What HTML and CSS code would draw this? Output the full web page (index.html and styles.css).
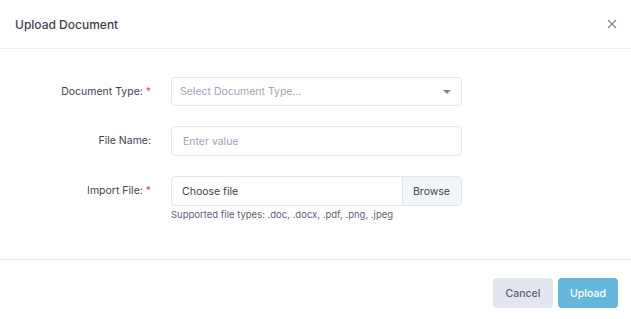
FILE: index.html
```html
<!DOCTYPE html>
<html lang="en">
<head>
    <meta charset="UTF-8">
    <meta name="viewport" content="width=device-width, initial-scale=1.0">
    <title>Upload Document</title>
    <link rel="stylesheet" href="styles.css">
</head>
<body>
    <div class="modal">
        <div class="modal-header">
            <h1 class="modal-title">Upload Document</h1>
            <button class="close-btn" aria-label="Close">
                <svg width="10" height="10" viewBox="0 0 10 10">
                    <path d="M1 1L9 9M9 1L1 9" stroke="#7e8299" stroke-width="1.2" fill="none"/>
                </svg>
            </button>
        </div>

        <div class="modal-body">
            <div class="form-row">
                <label class="form-label">Document Type: <span class="req">*</span></label>
                <div class="field">
                    <div class="select">
                        <span class="placeholder">Select Document Type...</span>
                        <span class="caret"></span>
                    </div>
                </div>
            </div>

            <div class="form-row">
                <label class="form-label">File Name:</label>
                <div class="field">
                    <div class="input"><span class="placeholder">Enter value</span></div>
                </div>
            </div>

            <div class="form-row">
                <label class="form-label">Import File: <span class="req">*</span></label>
                <div class="field">
                    <div class="file-input">
                        <span class="file-text">Choose file</span>
                        <span class="browse">Browse</span>
                    </div>
                    <div class="help">Supported file types: .doc, .docx, .pdf, .png, .jpeg</div>
                </div>
            </div>
        </div>

        <div class="modal-footer">
            <button class="btn btn-cancel">Cancel</button>
            <button class="btn btn-upload">Upload</button>
        </div>
    </div>
</body>
</html>
```

FILE: styles.css
```css
body {
    margin: 0;
    background: #fff;
    font-family: Inter, "Open Sans", sans-serif;
    color: #3f4254;
}
.modal {
    width: 631px;
    height: 319px;
    background: #fff;
}
.modal-header {
    height: 48px;
    padding: 0 14px 0 15px;
    display: flex;
    align-items: center;
    justify-content: space-between;
    border-bottom: 1px solid #eceef3;
}
.modal-title {
    margin: 0;
    font-size: 12px;
    font-weight: 500;
    color: #3f4254;
}
.close-btn {
    background: none;
    border: none;
    padding: 0;
    width: 10px;
    height: 10px;
    display: flex;
    cursor: pointer;
}
.modal-body {
    padding: 28px 0 0;
    height: 210px;
    box-sizing: border-box;
}
.form-row {
    display: flex;
    align-items: flex-start;
    margin-bottom: 20px;
}
.form-label {
    width: 171px;
    flex: none;
    text-align: right;
    font-size: 10.5px;
    color: #3f4254;
    line-height: 29px;
    padding-right: 20px;
    box-sizing: border-box;
}
.req {
    color: #f1416c;
}
.field {
    width: 291px;
}
.select, .input, .file-input {
    height: 29px;
    border: 1px solid #e4e6ef;
    border-radius: 4px;
    box-sizing: border-box;
    display: flex;
    align-items: center;
    font-size: 10.5px;
}
.select {
    padding: 0 10px 0 8px;
    justify-content: space-between;
}
.input {
    height: 30px;
    padding: 0 11px;
}
.placeholder {
    color: #a1a5b7;
}
.caret {
    width: 0;
    height: 0;
    border-left: 4px solid transparent;
    border-right: 4px solid transparent;
    border-top: 4px solid #7e8299;
}
.file-input {
    height: 30px;
    overflow: hidden;
}
.file-text {
    flex: 1;
    padding-left: 10px;
    color: #3f4254;
}
.browse {
    height: 100%;
    display: flex;
    align-items: center;
    padding: 0 11px 0 10px;
    background: #f3f6f9;
    border-left: 1px solid #e4e6ef;
    color: #3f4254;
}
.help {
    margin-top: 3px;
    font-size: 9.5px;
    color: #5e6278;
}
.modal-footer {
    border-top: 1px solid #e4e6ef;
    display: flex;
    justify-content: flex-end;
    gap: 5px;
    padding: 18px 13px 0 0;
}
.btn {
    height: 30px;
    border: none;
    border-radius: 4px;
    font-family: inherit;
    font-size: 10.5px;
    font-weight: 500;
    padding: 0;
    width: 60px;
    cursor: pointer;
}
.btn-cancel {
    background: #e4e6ef;
    color: #5e6278;
}
.btn-upload {
    background: #67b7dc;
    color: #fff;
}
```
